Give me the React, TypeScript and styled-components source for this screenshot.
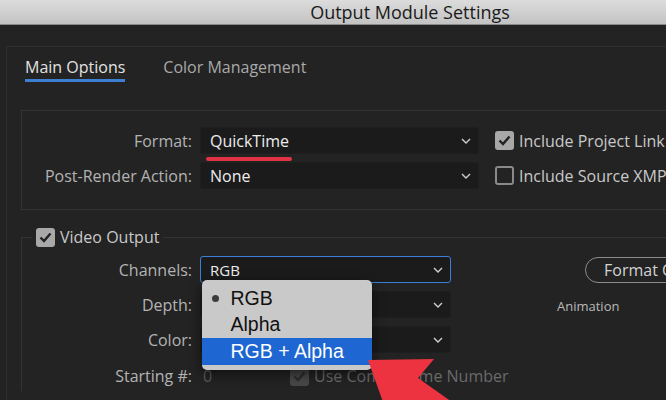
import React from "react";
import styled, { createGlobalStyle } from "styled-components";

const GlobalStyle = createGlobalStyle`
  html, body { margin: 0; padding: 0; background: #232323; overflow: hidden; }
  body { font-family: "Open Sans", "Noto Sans", sans-serif; }
  * { box-sizing: border-box; }
`;

const Window = styled.div`
  position: relative;
  width: 820px;
  height: 400px;
  background: #232323;
  display: flex;
  flex-direction: column;
  overflow: hidden;
`;

const TitleBar = styled.div`
  height: 25px;
  flex: none;
  background: linear-gradient(#dcdcdc, #c3c3c3);
  border-bottom: 1px solid #8a8a8a;
  display: flex;
  align-items: center;
  justify-content: center;
  font: 18px "Open Sans", sans-serif;
  color: #1a1a1a;
`;

const Content = styled.div`
  flex: 1;
  padding: 21px 0 0 6px;
  display: flex;
`;

const OuterPanel = styled.div`
  flex: 1;
  border: 1px solid #2f2f2f;
  border-right: none;
  border-bottom: none;
  padding: 0 0 0 14px;
`;

const Tabs = styled.div`
  display: flex;
  gap: 38px;
  margin-top: 10px;
  padding-left: 4px;
`;

const Tab = styled.div<{ $active?: boolean }>`
  font-size: 16px;
  line-height: 20px;
  padding-bottom: 2px;
  color: ${(p) => (p.$active ? "#e2e2e2" : "#a9a9a9")};
  border-bottom: 3px solid ${(p) => (p.$active ? "#3d7fd0" : "transparent")};
`;

const FormatPanel = styled.div`
  margin-top: 28px;
  border: 1px solid #333333;
  border-right: none;
  padding: 16px 0 20px 0;
`;

const FormGrid = styled.div<{ $cols: string }>`
  display: grid;
  grid-template-columns: ${(p) => p.$cols};
  column-gap: 8px;
  row-gap: 8px;
  align-items: center;
`;

const Label = styled.div`
  text-align: right;
  color: #b3b3b3;
  font-size: 16px;
  line-height: 20px;
  white-space: nowrap;
`;

const Select = styled.div<{ $focus?: boolean }>`
  position: relative;
  height: 27px;
  background: #1b1b1b;
  border-radius: 3px;
  border: ${(p) => (p.$focus ? "1.5px solid #3b7fd6" : "1px solid #1e1e1e")};
  display: flex;
  align-items: center;
  justify-content: space-between;
  padding: 0 7px 0 9px;
  color: #ededed;
`;

const SelectText = styled.span<{ $small?: boolean }>`
  font-size: ${(p) => (p.$small ? "15px" : "16px")};
  line-height: 20px;
  white-space: nowrap;
`;

const RedMark = styled.div`
  position: absolute;
  left: 5px;
  top: 29px;
  width: 86px;
  height: 4px;
  border-radius: 2px;
  background: #e23345;
`;

const CheckRow = styled.label<{ $dim?: boolean; $flush?: boolean }>`
  display: flex;
  align-items: center;
  gap: 5px;
  margin-left: ${(p) => (p.$flush ? "0" : "8px")};
  color: ${(p) => (p.$dim ? "#6a6a6a" : "#c9c9c9")};
  font-size: 16px;
  line-height: 20px;
  white-space: nowrap;
`;

const Box = styled.span<{ $checked?: boolean; $dim?: boolean }>`
  flex: none;
  width: 19px;
  height: 19px;
  border-radius: 3px;
  display: flex;
  align-items: center;
  justify-content: center;
  background: ${(p) => (p.$dim ? "#474747" : p.$checked ? "#a8a8a8" : "transparent")};
  border: ${(p) => (p.$checked ? "none" : "2px solid #8a8a8a")};
`;

const VideoSet = styled.fieldset`
  margin: 17px 0 0 0;
  padding: 9px 0 0 0;
  border: 1px solid #333333;
  border-right: none;
  border-bottom: none;
  min-width: 0;
`;

const Legend = styled.legend`
  margin-left: 10px;
  padding: 0 4px;
  display: flex;
  align-items: center;
  gap: 5px;
  color: #c9c9c9;
  font-size: 16px;
  line-height: 20px;
`;

const VideoBody = styled.div`
  display: flex;
  align-items: flex-start;
`;

const SideColumn = styled.div`
  margin-left: 106px;
  display: flex;
  flex-direction: column;
  align-items: flex-start;
`;

const PillButton = styled.button`
  margin: 1px 0 0 28px;
  height: 26px;
  border: 1.5px solid #8c8c8c;
  border-radius: 13px;
  background: transparent;
  padding: 0 18px;
  color: #d2d2d2;
  font: 16px "Open Sans", sans-serif;
  white-space: nowrap;
`;

const Caption = styled.div`
  margin-top: 14px;
  color: #b8b8b8;
  font-size: 13px;
  line-height: 18px;
`;

const StartCell = styled.div`
  display: flex;
  align-items: center;
  height: 30px;
`;

const StartValue = styled.span`
  flex: none;
  width: 90px;
  padding-left: 3px;
  color: #5a5a5a;
  font-size: 16px;
`;

const Menu = styled.div`
  position: absolute;
  left: 0.5px;
  top: 23px;
  width: 170px;
  z-index: 5;
  background: #c9c9c9;
  border-radius: 5px;
  padding: 5px 0 5px;
  box-shadow: 0 4px 12px rgba(0, 0, 0, 0.55);
`;

const MenuItem = styled.div<{ $hl?: boolean }>`
  height: 26.5px;
  display: flex;
  align-items: center;
  padding-left: 10px;
  font: 19.5px "Liberation Sans", Arial, sans-serif;
  color: ${(p) => (p.$hl ? "#ffffff" : "#111111")};
  background: ${(p) => (p.$hl ? "#1e66d2" : "transparent")};
`;

const Mark = styled.span`
  width: 19px;
  flex: none;
  display: flex;
  align-items: center;
`;

const Dot = styled.span`
  width: 7px;
  height: 7px;
  border-radius: 50%;
  background: #3c3c3c;
`;

const Overlay = styled.svg`
  position: absolute;
  left: 0;
  top: 0;
  pointer-events: none;
  z-index: 10;
`;

const Chevron = () => (
  <svg width="10" height="6" viewBox="0 0 10 6">
    <polyline points="1,1 5,5 9,1" fill="none" stroke="#cfcfcf" strokeWidth="1.4" />
  </svg>
);

const Check = ({ dim }: { dim?: boolean }) => (
  <svg width="13" height="11" viewBox="0 0 13 11">
    <polyline
      points="1.5,5.5 5,9 11.5,1.5"
      fill="none"
      stroke={dim ? "#2c2c2c" : "#222"}
      strokeWidth="2.4"
    />
  </svg>
);

export default function App() {
  return (
    <>
      <GlobalStyle />
      <Window>
        <TitleBar>Output Module Settings</TitleBar>
        <Content>
          <OuterPanel>
            <Tabs>
              <Tab $active>Main Options</Tab>
              <Tab>Color Management</Tab>
            </Tabs>
            <FormatPanel>
              <FormGrid $cols="170px 279px auto">
                <Label>Format:</Label>
                <Select>
                  <SelectText>QuickTime</SelectText>
                  <Chevron />
                  <RedMark />
                </Select>
                <CheckRow>
                  <Box $checked>
                    <Check />
                  </Box>
                  Include Project Link
                </CheckRow>
                <Label>Post-Render Action:</Label>
                <Select>
                  <SelectText>None</SelectText>
                  <Chevron />
                </Select>
                <CheckRow>
                  <Box />
                  Include Source XMP
                </CheckRow>
              </FormGrid>
            </FormatPanel>
            <VideoSet>
              <Legend>
                <Box $checked>
                  <Check />
                </Box>
                Video Output
              </Legend>
              <VideoBody>
                <FormGrid $cols="170px 251px">
                  <Label>Channels:</Label>
                  <Select $focus>
                    <SelectText $small>RGB</SelectText>
                    <Chevron />
                    <Menu>
                      <MenuItem>
                        <Mark>
                          <Dot />
                        </Mark>
                        RGB
                      </MenuItem>
                      <MenuItem>
                        <Mark />
                        Alpha
                      </MenuItem>
                      <MenuItem $hl>
                        <Mark />
                        RGB + Alpha
                      </MenuItem>
                    </Menu>
                  </Select>
                  <Label>Depth:</Label>
                  <Select>
                    <SelectText />
                    <Chevron />
                  </Select>
                  <Label>Color:</Label>
                  <Select>
                    <SelectText />
                    <Chevron />
                  </Select>
                  <Label>Starting #:</Label>
                  <StartCell>
                    <StartValue>0</StartValue>
                    <CheckRow $dim $flush>
                      <Box $checked $dim>
                        <Check dim />
                      </Box>
                      Use Comp Frame Number
                    </CheckRow>
                  </StartCell>
                </FormGrid>
                <SideColumn>
                  <PillButton>Format Options...</PillButton>
                  <Caption>Animation</Caption>
                </SideColumn>
              </VideoBody>
            </VideoSet>
          </OuterPanel>
        </Content>
        <Overlay width="666" height="400" viewBox="0 0 666 400">
          <polygon points="368,360 434,359 418,378 452,402 383,402" fill="#ee3340" />
        </Overlay>
      </Window>
    </>
  );
}
